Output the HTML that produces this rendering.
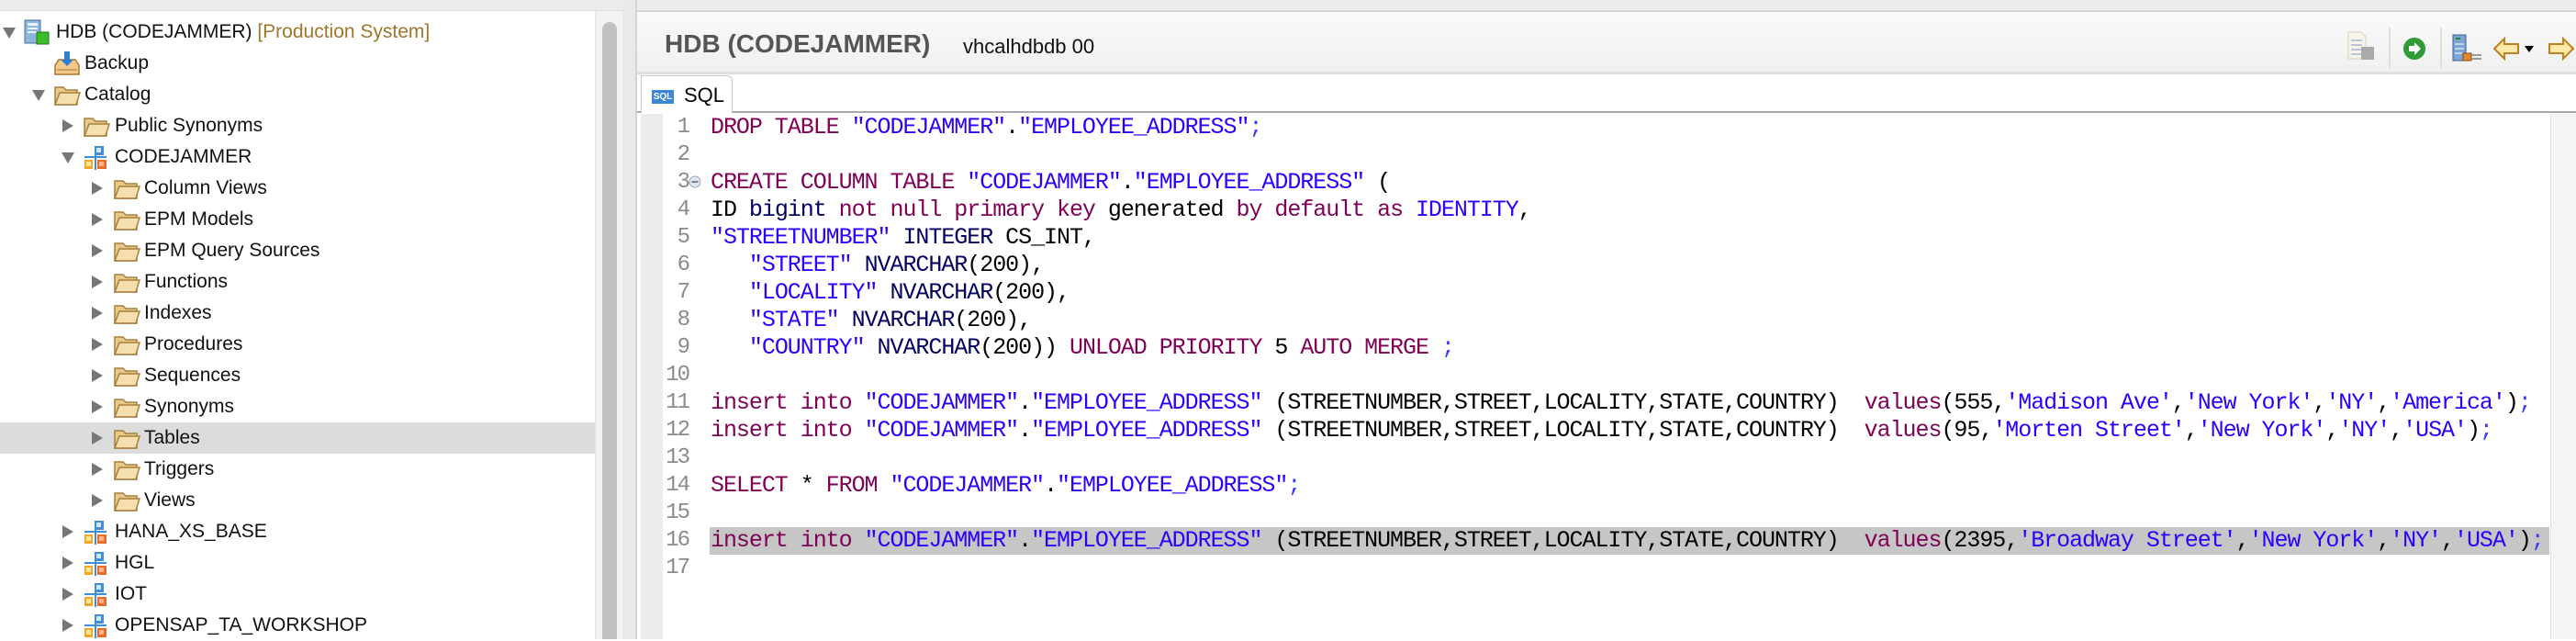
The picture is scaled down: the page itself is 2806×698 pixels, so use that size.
<!DOCTYPE html>
<html><head><meta charset="utf-8"><style>
*{margin:0;padding:0;box-sizing:border-box}
body{width:2806px;height:696px;overflow:hidden;background:#fff;position:relative;font-family:"Liberation Sans",sans-serif}
.a{position:absolute}
.row{position:absolute;left:0;width:648px;height:34px}
.row span.t{position:absolute;top:5px;font-size:21px;color:#111;white-space:nowrap}
.tri{position:absolute;width:0;height:0}
.tr{border-top:7px solid transparent;border-bottom:7px solid transparent;border-left:12px solid #777;top:10px}
.td{border-left:7px solid transparent;border-right:7px solid transparent;border-top:12px solid #777;top:12px}
.ic{position:absolute;top:3px;width:30px;height:28px}
.code{position:absolute;left:774px;font-family:"Liberation Mono",monospace;font-size:25px;letter-spacing:-1.04px;line-height:30px;white-space:pre;color:#000}
.ln{position:absolute;left:718px;width:32px;text-align:right;font-family:"Liberation Mono",monospace;font-size:24px;letter-spacing:-2px;line-height:30px;color:#8a8a8a;white-space:pre}
.k{color:#7f0055}.s{color:#2a00ff}.n{color:#000060}.p{color:#3a3aff}
</style></head><body>
<div class="a" style="left:0;top:0;width:2806px;height:12px;background:#ececec;border-bottom:1px solid #dcdcdc"></div>
<div class="a" style="left:0;top:12px;width:648px;height:684px;background:#fff"></div>
<div class="a" style="left:648px;top:12px;width:32px;height:684px;background:#f3f3f3;border-left:1px solid #e6e6e6;border-right:1px solid #e6e6e6"></div>
<div class="a" style="left:656px;top:24px;width:16px;height:672px;background:#c2c2c2;border-radius:8px 8px 0 0"></div>
<div class="a" style="left:680px;top:0;width:14px;height:696px;background:#e9e9e9;border-right:2px solid #d4d4d4"></div>

<svg width="0" height="0" style="position:absolute"><defs>
<g id="fold"><path d="M2 6 h9 l3 3 h12 v16 H2z" fill="#e9c98a" stroke="#a87f3c" stroke-width="1.5"/><path d="M2 25 L7 12 H29 L25 25z" fill="#f6dfae" stroke="#a87f3c" stroke-width="1.5"/></g>
<g id="sch"><rect x="13" y="2" width="10" height="10" fill="#3d8fd8"/><rect x="15" y="4" width="5" height="5" fill="#cfe6fb"/><rect x="13" y="2" width="2" height="26" fill="#3d8fd8"/><rect x="2" y="13" width="24" height="2" fill="#3d8fd8"/><rect x="2" y="17" width="9" height="10" fill="#f5a623"/><rect x="4" y="19" width="5" height="5" fill="#fde7a0"/><rect x="16" y="17" width="10" height="10" fill="#ef6a2a"/><rect x="18" y="19" width="5" height="5" fill="#fbb797"/></g>
</defs></svg>

<div class="row" style="top:18px"><div class="tri td" style="left:3px"></div>
<svg class="ic" style="left:25px" viewBox="0 0 30 28"><rect x="2" y="1" width="17" height="25" fill="#8fb4dd" stroke="#4a6f9a"/><rect x="5" y="4" width="11" height="3" fill="#e8f0fa"/><rect x="5" y="9" width="11" height="2" fill="#e8f0fa"/><rect x="5" y="13" width="11" height="2" fill="#e8f0fa"/><rect x="15" y="14" width="13" height="13" fill="#3cbc2c" stroke="#1d7a16"/></svg>
<span class="t" style="left:61px">HDB (CODEJAMMER) <span style="color:#a0752a">[Production System]</span></span></div>
<div class="row" style="top:52px">
<svg class="ic" style="left:58px" viewBox="0 0 30 28"><path d="M2 16 L6 10 H24 L28 16 V26 H2z" fill="#f2c98a" stroke="#a8762f" stroke-width="1.5"/><rect x="12" y="1" width="6" height="10" fill="#2f7fd1"/><path d="M8 10 L15 17 L22 10z" fill="#2f7fd1"/><line x1="4" y1="21" x2="26" y2="21" stroke="#a8762f"/></svg>
<span class="t" style="left:92px">Backup</span></div>
<div class="row" style="top:86px"><div class="tri td" style="left:35px"></div><svg class="ic" style="left:58px" viewBox="0 0 30 28"><use href="#fold"/></svg><span class="t" style="left:92px">Catalog</span></div>
<div class="row" style="top:120px"><div class="tri tr" style="left:68px"></div><svg class="ic" style="left:90px" viewBox="0 0 30 28"><use href="#fold"/></svg><span class="t" style="left:125px">Public Synonyms</span></div>
<div class="row" style="top:154px"><div class="tri td" style="left:67px"></div><svg class="ic" style="left:90px" viewBox="0 0 30 28"><use href="#sch"/></svg><span class="t" style="left:125px">CODEJAMMER</span></div>
<div class="row" style="top:188px"><div class="tri tr" style="left:100px"></div><svg class="ic" style="left:123px" viewBox="0 0 30 28"><use href="#fold"/></svg><span class="t" style="left:157px">Column Views</span></div>
<div class="row" style="top:222px"><div class="tri tr" style="left:100px"></div><svg class="ic" style="left:123px" viewBox="0 0 30 28"><use href="#fold"/></svg><span class="t" style="left:157px">EPM Models</span></div>
<div class="row" style="top:256px"><div class="tri tr" style="left:100px"></div><svg class="ic" style="left:123px" viewBox="0 0 30 28"><use href="#fold"/></svg><span class="t" style="left:157px">EPM Query Sources</span></div>
<div class="row" style="top:290px"><div class="tri tr" style="left:100px"></div><svg class="ic" style="left:123px" viewBox="0 0 30 28"><use href="#fold"/></svg><span class="t" style="left:157px">Functions</span></div>
<div class="row" style="top:324px"><div class="tri tr" style="left:100px"></div><svg class="ic" style="left:123px" viewBox="0 0 30 28"><use href="#fold"/></svg><span class="t" style="left:157px">Indexes</span></div>
<div class="row" style="top:358px"><div class="tri tr" style="left:100px"></div><svg class="ic" style="left:123px" viewBox="0 0 30 28"><use href="#fold"/></svg><span class="t" style="left:157px">Procedures</span></div>
<div class="row" style="top:392px"><div class="tri tr" style="left:100px"></div><svg class="ic" style="left:123px" viewBox="0 0 30 28"><use href="#fold"/></svg><span class="t" style="left:157px">Sequences</span></div>
<div class="row" style="top:426px"><div class="tri tr" style="left:100px"></div><svg class="ic" style="left:123px" viewBox="0 0 30 28"><use href="#fold"/></svg><span class="t" style="left:157px">Synonyms</span></div>
<div class="row" style="top:460px;background:#dcdcdc"><div class="tri tr" style="left:100px"></div><svg class="ic" style="left:123px" viewBox="0 0 30 28"><use href="#fold"/></svg><span class="t" style="left:157px">Tables</span></div>
<div class="row" style="top:494px"><div class="tri tr" style="left:100px"></div><svg class="ic" style="left:123px" viewBox="0 0 30 28"><use href="#fold"/></svg><span class="t" style="left:157px">Triggers</span></div>
<div class="row" style="top:528px"><div class="tri tr" style="left:100px"></div><svg class="ic" style="left:123px" viewBox="0 0 30 28"><use href="#fold"/></svg><span class="t" style="left:157px">Views</span></div>
<div class="row" style="top:562px"><div class="tri tr" style="left:68px"></div><svg class="ic" style="left:90px" viewBox="0 0 30 28"><use href="#sch"/></svg><span class="t" style="left:125px">HANA_XS_BASE</span></div>
<div class="row" style="top:596px"><div class="tri tr" style="left:68px"></div><svg class="ic" style="left:90px" viewBox="0 0 30 28"><use href="#sch"/></svg><span class="t" style="left:125px">HGL</span></div>
<div class="row" style="top:630px"><div class="tri tr" style="left:68px"></div><svg class="ic" style="left:90px" viewBox="0 0 30 28"><use href="#sch"/></svg><span class="t" style="left:125px">IOT</span></div>
<div class="row" style="top:664px"><div class="tri tr" style="left:68px"></div><svg class="ic" style="left:90px" viewBox="0 0 30 28"><use href="#sch"/></svg><span class="t" style="left:125px">OPENSAP_TA_WORKSHOP</span></div>

<div class="a" style="left:694px;top:12px;width:2112px;height:66px;background:linear-gradient(#fafafa,#f0f0f0);border-top:1px solid #c9c9d6"></div>
<div class="a" style="left:694px;top:78px;width:2112px;height:3px;background:#e0e0e0"></div>
<div class="a" style="left:724px;top:32px;font-size:28px;font-weight:bold;color:#555">HDB (CODEJAMMER)</div>
<div class="a" style="left:1049px;top:38px;font-size:22px;color:#111">vhcalhdbdb 00</div>
<svg class="a" style="left:2555px;top:34px" width="40" height="34" viewBox="0 0 40 34"><path d="M3 1 H17 L22 6 V30 H3z" fill="#f7f4ec" stroke="#d8cfb8"/><g stroke="#b8c6d8" stroke-width="2"><line x1="6" y1="10" x2="18" y2="10"/><line x1="6" y1="15" x2="18" y2="15"/><line x1="6" y1="20" x2="18" y2="20"/><line x1="6" y1="25" x2="18" y2="25"/></g><rect x="17" y="17" width="14" height="14" fill="#aaa"/></svg>
<div class="a" style="left:2602px;top:30px;width:2px;height:44px;background:#ddd"></div>
<svg class="a" style="left:2617px;top:40px" width="26" height="26" viewBox="0 0 26 26"><circle cx="13" cy="13" r="12" fill="#2e9b35"/><path d="M7 10 h6 v-4 l7 7 -7 7 v-4 h-6z" fill="#fff"/></svg>
<div class="a" style="left:2658px;top:30px;width:2px;height:44px;background:#ddd"></div>
<svg class="a" style="left:2670px;top:36px" width="34" height="34" viewBox="0 0 34 34"><rect x="2" y="2" width="14" height="28" fill="#7ea4d6" stroke="#3b5f92"/><rect x="5" y="5" width="5" height="2" fill="#1c8a2e"/><g stroke="#fff"><line x1="4" y1="12" x2="14" y2="12"/><line x1="4" y1="17" x2="14" y2="17"/><line x1="4" y1="22" x2="14" y2="22"/></g><rect x="13" y="22" width="9" height="8" fill="#e08a2a" stroke="#8a4a10"/><g stroke="#999" stroke-width="2"><line x1="22" y1="24" x2="33" y2="24"/><line x1="22" y1="28" x2="33" y2="28"/></g></svg>
<svg class="a" style="left:2715px;top:40px" width="30" height="26" viewBox="0 0 30 26"><path d="M2 13 L13 2 V8 H28 V18 H13 V24z" fill="#fde9a8" stroke="#c0801e" stroke-width="2"/></svg>
<div class="a" style="left:2750px;top:50px;width:0;height:0;border-left:5px solid transparent;border-right:5px solid transparent;border-top:7px solid #000"></div>
<svg class="a" style="left:2775px;top:40px" width="30" height="26" viewBox="0 0 30 26"><path d="M28 13 L17 2 V8 H2 V18 H17 V24z" fill="#fde9a8" stroke="#c0801e" stroke-width="2"/></svg>

<div class="a" style="left:694px;top:121px;width:2112px;height:2px;background:#a8a8a8"></div>
<div class="a" style="left:698px;top:82px;width:100px;height:41px;background:#fff;border:1px solid #c8c8c8;border-bottom:none;border-radius:0 6px 0 0"></div>
<div class="a" style="left:710px;top:98px;width:24px;height:15px;background:#3c86d6;color:#fff;font-size:10px;font-weight:bold;line-height:15px;text-align:center">SQL</div>
<div class="a" style="left:745px;top:91px;font-size:22px;color:#000">SQL</div>

<div class="a" style="left:698px;top:124px;width:24px;height:572px;background:#ececec"></div>
<div class="a" style="left:2778px;top:124px;width:28px;height:572px;background:#f4f4f4;border-left:1px solid #e2e2e2"></div>
<div class="a" style="left:773px;top:574px;width:2004px;height:30px;background:#c6c6c6"></div>
<div class="ln" style="top:124px">1
2
3
4
5
6
7
8
9
10
11
12
13
14
15
16
17</div>
<svg class="a" style="left:750px;top:191px" width="14" height="14" viewBox="0 0 14 14"><circle cx="7" cy="7" r="6" fill="#dfe6ee" stroke="#9aa8b8"/><line x1="3.5" y1="7" x2="10.5" y2="7" stroke="#55657a" stroke-width="1.5"/></svg>
<div class="code" style="top:124px"><span class="k">DROP TABLE</span> <span class="s">"CODEJAMMER"</span>.<span class="s">"EMPLOYEE_ADDRESS"</span><span class="p">;</span>

<span class="k">CREATE COLUMN TABLE</span> <span class="s">"CODEJAMMER"</span>.<span class="s">"EMPLOYEE_ADDRESS"</span> (
ID <span class="n">bigint</span> <span class="k">not null primary key</span> generated <span class="k">by default as</span> <span class="s">IDENTITY</span>,
<span class="s">"STREETNUMBER"</span> <span class="n">INTEGER</span> CS_INT,
   <span class="s">"STREET"</span> <span class="n">NVARCHAR</span>(200),
   <span class="s">"LOCALITY"</span> <span class="n">NVARCHAR</span>(200),
   <span class="s">"STATE"</span> <span class="n">NVARCHAR</span>(200),
   <span class="s">"COUNTRY"</span> <span class="n">NVARCHAR</span>(200)) <span class="k">UNLOAD PRIORITY</span> 5 <span class="k">AUTO MERGE</span> <span class="p">;</span>

<span class="k">insert into</span> <span class="s">"CODEJAMMER"</span>.<span class="s">"EMPLOYEE_ADDRESS"</span> (STREETNUMBER,STREET,LOCALITY,STATE,COUNTRY)  <span class="k">values</span>(555,<span class="s">'Madison Ave'</span>,<span class="s">'New York'</span>,<span class="s">'NY'</span>,<span class="s">'America'</span>)<span class="p">;</span>
<span class="k">insert into</span> <span class="s">"CODEJAMMER"</span>.<span class="s">"EMPLOYEE_ADDRESS"</span> (STREETNUMBER,STREET,LOCALITY,STATE,COUNTRY)  <span class="k">values</span>(95,<span class="s">'Morten Street'</span>,<span class="s">'New York'</span>,<span class="s">'NY'</span>,<span class="s">'USA'</span>)<span class="p">;</span>

<span class="k">SELECT</span> * <span class="k">FROM</span> <span class="s">"CODEJAMMER"</span>.<span class="s">"EMPLOYEE_ADDRESS"</span><span class="p">;</span>

<span class="k">insert into</span> <span class="s">"CODEJAMMER"</span>.<span class="s">"EMPLOYEE_ADDRESS"</span> (STREETNUMBER,STREET,LOCALITY,STATE,COUNTRY)  <span class="k">values</span>(2395,<span class="s">'Broadway Street'</span>,<span class="s">'New York'</span>,<span class="s">'NY'</span>,<span class="s">'USA'</span>)<span class="p">;</span>
</div>
</body></html>
